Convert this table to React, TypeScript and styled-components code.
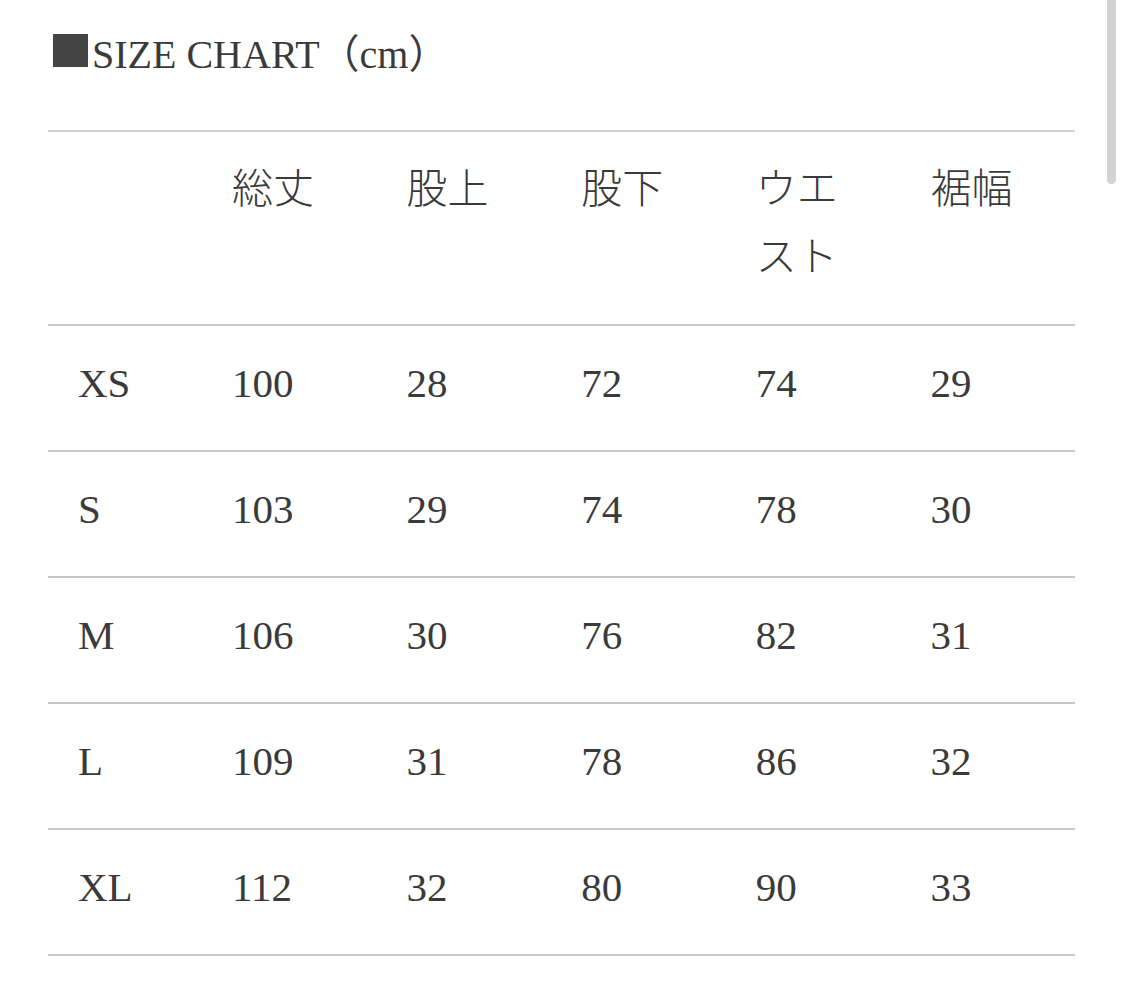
import * as React from "react";
import styled, { createGlobalStyle } from "styled-components";

const GlobalStyle = createGlobalStyle`
    html, body {
        margin: 0;
        padding: 0;
        background: #ffffff;
        overflow: hidden;
    }
    body {
        font-family: "Liberation Serif", "Noto Sans CJK JP", serif;
        color: #3a3a3a;
    }
`;

const Page = styled.div`
    position: relative;
    width: 1125px;
    height: 985px;
    box-sizing: border-box;
    padding: 22px 50px 0 48px;
`;
const Title = styled.h2`
    display: flex;
    align-items: center;
    margin: 0 0 51px 0;
    height: 57px;
    font-size: 40px;
    font-weight: normal;
    letter-spacing: 0;
`;
const Square = styled.span`
    display: inline-block;
    width: 35px;
    height: 33px;
    margin: 0 4px 0 5px;
    background: #444444;
`;
const Table = styled.div`
    display: grid;
    grid-template-columns: 154px repeat(5, 1fr);
    border-top: 2px solid #d2d2d2;
`;
const Cell = styled.div<{ $head?: boolean }>`
    padding: ${p => (p.$head ? "19px 30px 37px" : "23px 30px 33px")};
    font-size: 41px;
    line-height: 68px;
    border-bottom: 2px solid #c8c8c8;
    font-family: ${p =>
        p.$head
            ? `"Noto Sans CJK JP", serif`
            : `"Liberation Serif", "Noto Sans CJK JP", serif`};
    font-weight: ${p => (p.$head ? 300 : "normal")};
    word-break: break-all;
`;
const Scrollbar = styled.div`
    position: absolute;
    top: 0;
    right: 9px;
    width: 9px;
    height: 184px;
    border-radius: 0 0 5px 5px;
    background: #d3d3d3;
`;

const headers = ["", "総丈", "股上", "股下", "ウエスト", "裾幅"];
const rows: (string | number)[][] = [
    ["XS", 100, 28, 72, 74, 29],
    ["S", 103, 29, 74, 78, 30],
    ["M", 106, 30, 76, 82, 31],
    ["L", 109, 31, 78, 86, 32],
    ["XL", 112, 32, 80, 90, 33],
];

const App = () => {
    return (
        <Page>
            <GlobalStyle />
            <Title>
                <Square />
                SIZE CHART（cm）
            </Title>
            <Table>
                {headers.map((h, i) => (
                    <Cell key={"h" + i} $head>
                        {h}
                    </Cell>
                ))}
                {rows.map(row =>
                    row.map((v, i) => <Cell key={row[0] + "-" + i}>{v}</Cell>)
                )}
            </Table>
            <Scrollbar />
        </Page>
    );
};
export default App;
